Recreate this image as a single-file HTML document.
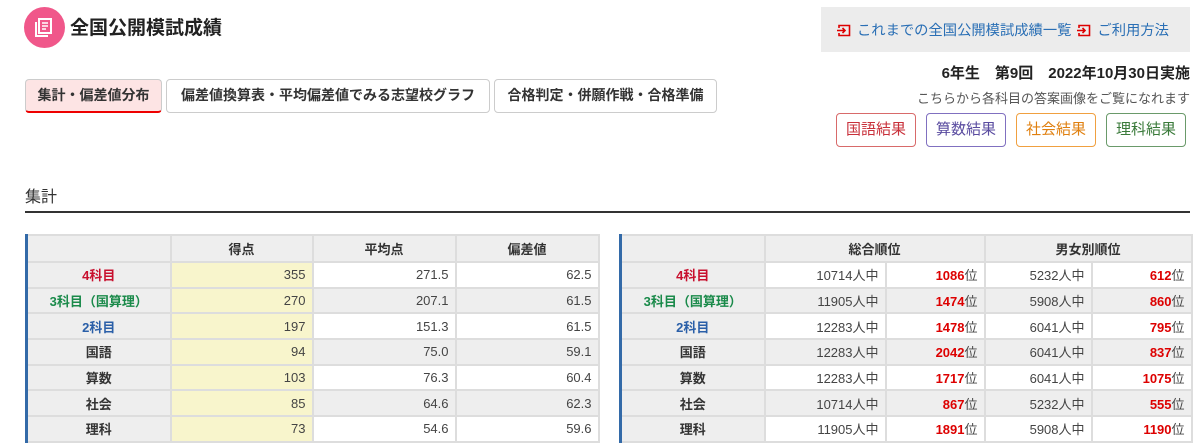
<!DOCTYPE html>
<html><head><meta charset="utf-8"><style>
*{box-sizing:border-box;margin:0;padding:0}
body{width:1200px;height:447px;overflow:hidden;background:#fff;font-family:"Liberation Sans","Noto Sans CJK JP",sans-serif;color:#333;position:relative}
.abs{position:absolute}
.icon{left:24px;top:7px;width:41px;height:41px;border-radius:50%;background:#f0578a}
.title{left:70px;top:13px;font-size:19px;font-weight:bold;color:#222}
.links{left:821px;top:7px;width:369px;height:45px;background:#ececec;font-size:14.3px;color:#2a6fb5;padding:12px 0 0 16px;white-space:nowrap}
.ex{display:inline-block;width:14px;height:13px;vertical-align:-2px;margin-right:6px}
.tab{top:79px;height:34px;border:1px solid #ccc;border-radius:4px;font-size:14px;font-weight:bold;text-align:center;line-height:31px;background:#fff;color:#333}
.info{right:10px;top:62px;font-size:15px;font-weight:bold;color:#222;white-space:nowrap}
.sub{right:10px;top:88px;font-size:13px;color:#555}
.btn{top:113px;height:34px;width:80px;border:1px solid;border-radius:4px;text-align:center;line-height:32px;font-size:15px}
.h2{left:25px;top:183px;font-size:16px;color:#333}
.rule{left:25px;top:211px;width:1165px;height:2px;background:#333}
table{position:absolute;top:234px;border-collapse:collapse;font-size:13px;table-layout:fixed;border-left:3px solid #336aa8}
td{border:2px solid #ddd;height:25.7px;text-align:right;padding-right:6px;color:#444}
tr:first-child td{height:27px}
td.h{background:#eee;text-align:center;font-weight:bold;color:#333;padding:0}
td.l{background:#eee;text-align:center;font-weight:bold;padding:0;color:#333}
.y{background:#f8f5cc}
tr.g td{background:#eee}
tr.g td.y{background:#f8f5cc}
td.l.r{color:#c8102e}td.l.gr{color:#1a8a4a}td.l.b{color:#2a5fa8}
.rk b{color:#d00}
</style></head><body>
<div class="abs icon"><svg width="41" height="41" viewBox="0 0 41 41"><rect x="15" y="12" width="12" height="14" fill="none" stroke="#fff" stroke-width="2"/><path d="M12 15v14h12" fill="none" stroke="#fff" stroke-width="2"/><path d="M18 16h6M18 19h6M18 22h4" stroke="#fff" stroke-width="1.5"/></svg></div>
<div class="abs title">全国公開模試成績</div>
<div class="abs links"><svg class="ex" viewBox="0 0 14 13"><path d="M2 4V1.5h10.5v10H2V9" fill="none" stroke="#d00" stroke-width="1.6"/><path d="M0 6.5h8M5.5 4l2.5 2.5L5.5 9" fill="none" stroke="#d00" stroke-width="1.6"/></svg>これまでの全国公開模試成績一覧 <svg class="ex" style="margin-left:2px" viewBox="0 0 14 13"><path d="M2 4V1.5h10.5v10H2V9" fill="none" stroke="#d00" stroke-width="1.6"/><path d="M0 6.5h8M5.5 4l2.5 2.5L5.5 9" fill="none" stroke="#d00" stroke-width="1.6"/></svg>ご利用方法</div>
<div class="abs tab" style="left:25px;width:137px;background:#fde4e4;border-bottom:2px solid #e00">集計・偏差値分布</div>
<div class="abs tab" style="left:166px;width:324px">偏差値換算表・平均偏差値でみる志望校グラフ</div>
<div class="abs tab" style="left:494px;width:223px">合格判定・併願作戦・合格準備</div>
<div class="abs info">6年生　第9回　2022年10月30日実施</div>
<div class="abs sub">こちらから各科目の答案画像をご覧になれます</div>
<div class="abs btn" style="left:836px;border-color:#d86a6a;color:#c8303a">国語結果</div>
<div class="abs btn" style="left:926px;border-color:#8070c0;color:#5a4ca0">算数結果</div>
<div class="abs btn" style="left:1016px;border-color:#f0a040;color:#e08010">社会結果</div>
<div class="abs btn" style="left:1106px;border-color:#6a9a6a;color:#3a7a3a">理科結果</div>
<div class="abs h2">集計</div>
<div class="abs rule"></div>
<table style="left:25px;width:572px">
<colgroup><col style="width:144px"><col style="width:142px"><col style="width:143px"><col style="width:143px"></colgroup>
<tr><td class="h"></td><td class="h">得点</td><td class="h">平均点</td><td class="h">偏差値</td></tr>
<tr><td class="l r">4科目</td><td class="y">355</td><td>271.5</td><td>62.5</td></tr>
<tr class="g"><td class="l gr">3科目（国算理）</td><td class="y">270</td><td>207.1</td><td>61.5</td></tr>
<tr><td class="l b">2科目</td><td class="y">197</td><td>151.3</td><td>61.5</td></tr>
<tr class="g"><td class="l">国語</td><td class="y">94</td><td>75.0</td><td>59.1</td></tr>
<tr><td class="l">算数</td><td class="y">103</td><td>76.3</td><td>60.4</td></tr>
<tr class="g"><td class="l">社会</td><td class="y">85</td><td>64.6</td><td>62.3</td></tr>
<tr><td class="l">理科</td><td class="y">73</td><td>54.6</td><td>59.6</td></tr>
</table>
<table style="left:619px;width:571px" class="rk">
<colgroup><col style="width:144px"><col style="width:121px"><col style="width:99px"><col style="width:107px"><col style="width:100px"></colgroup>
<tr><td class="h"></td><td class="h" colspan="2">総合順位</td><td class="h" colspan="2">男女別順位</td></tr>
<tr><td class="l r">4科目</td><td>10714人中</td><td><b>1086</b>位</td><td>5232人中</td><td><b>612</b>位</td></tr>
<tr class="g"><td class="l gr">3科目（国算理）</td><td>11905人中</td><td><b>1474</b>位</td><td>5908人中</td><td><b>860</b>位</td></tr>
<tr><td class="l b">2科目</td><td>12283人中</td><td><b>1478</b>位</td><td>6041人中</td><td><b>795</b>位</td></tr>
<tr class="g"><td class="l">国語</td><td>12283人中</td><td><b>2042</b>位</td><td>6041人中</td><td><b>837</b>位</td></tr>
<tr><td class="l">算数</td><td>12283人中</td><td><b>1717</b>位</td><td>6041人中</td><td><b>1075</b>位</td></tr>
<tr class="g"><td class="l">社会</td><td>10714人中</td><td><b>867</b>位</td><td>5232人中</td><td><b>555</b>位</td></tr>
<tr><td class="l">理科</td><td>11905人中</td><td><b>1891</b>位</td><td>5908人中</td><td><b>1190</b>位</td></tr>
</table>
</body></html>
